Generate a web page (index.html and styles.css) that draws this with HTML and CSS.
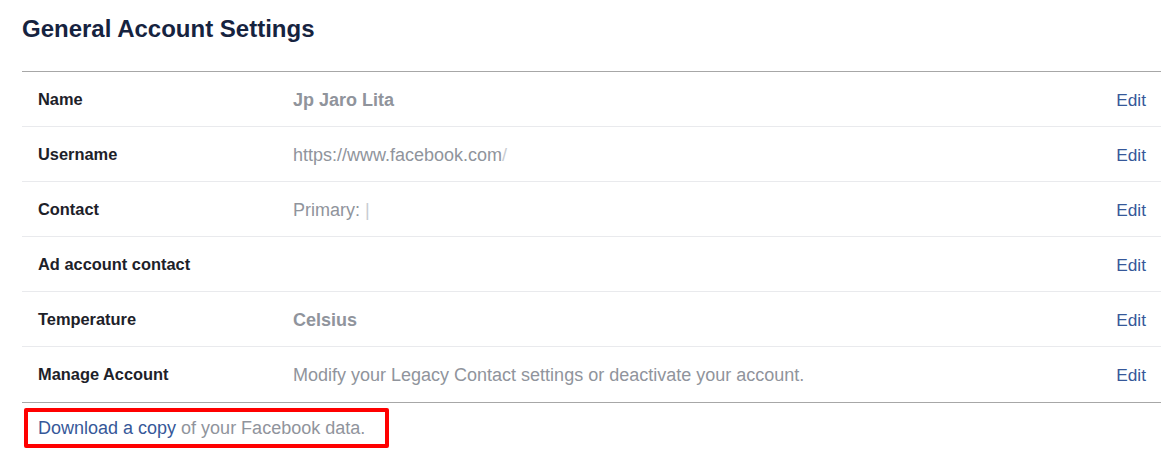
FILE: index.html
```html
<!DOCTYPE html>
<html lang="en">
<head>
<meta charset="utf-8">
<title>General Account Settings</title>
<link rel="stylesheet" href="styles.css">
</head>
<body>
<div class="page">
  <h1 class="title">General Account Settings</h1>
  <div class="settings">
    <div class="row">
      <div class="label">Name</div>
      <div class="value strong">Jp Jaro Lita</div>
      <a class="edit" href="#">Edit</a>
    </div>
    <div class="row">
      <div class="label">Username</div>
      <div class="value">https://www.facebook.com<span class="blur">/</span></div>
      <a class="edit" href="#">Edit</a>
    </div>
    <div class="row">
      <div class="label">Contact</div>
      <div class="value">Primary: <span class="blur">|</span></div>
      <a class="edit" href="#">Edit</a>
    </div>
    <div class="row">
      <div class="label">Ad account contact</div>
      <div class="value"></div>
      <a class="edit" href="#">Edit</a>
    </div>
    <div class="row">
      <div class="label">Temperature</div>
      <div class="value strong">Celsius</div>
      <a class="edit" href="#">Edit</a>
    </div>
    <div class="row">
      <div class="label">Manage Account</div>
      <div class="value">Modify your Legacy Contact settings or deactivate your account.</div>
      <a class="edit" href="#">Edit</a>
    </div>
  </div>
  <div class="footer">
    <p class="download"><a href="#" class="link">Download a copy</a> of your Facebook data.</p>
  </div>
</div>
</body>
</html>
```
FILE: styles.css
```css
html, body {
  margin: 0;
  padding: 0;
  background: #ffffff;
}
body {
  font-family: "Liberation Sans", Arial, sans-serif;
}
.page {
  padding: 0 7px 0 22px;
}
.title {
  margin: 0;
  padding-top: 15px;
  height: 71px;
  box-sizing: border-box;
  font-size: 24px;
  line-height: 28px;
  font-weight: bold;
  color: #16233f;
}
.settings {
  border-top: 1px solid #a7a7a7;
  border-bottom: 1px solid #a7a7a7;
}
.row {
  display: flex;
  align-items: flex-start;
  height: 55.05px;
  box-sizing: border-box;
  padding: 0 15px 0 16px;
  border-bottom: 1px solid #e9eaed;
}
.row:last-child {
  border-bottom: none;
}
.label {
  width: 255px;
  flex: none;
  padding-top: 17px;
  font-size: 16.4px;
  line-height: 20px;
  font-weight: bold;
  color: #1d2129;
}
.value {
  flex: 1;
  padding-top: 18px;
  font-size: 18px;
  line-height: 21px;
  color: #90949c;
}
.value.strong {
  font-weight: bold;
}
.blur {
  color: #c8ccd2;
}
.edit {
  padding-top: 18px;
  font-size: 17.3px;
  line-height: 21px;
  color: #365899;
  text-decoration: none;
}
.footer {
  padding: 5px 0 0 2px;
}
.download {
  display: inline-block;
  margin: 0;
  padding: 4px 20px 4px 10px;
  border: 4px solid #ff0000;
  border-radius: 2px;
  font-size: 18px;
  line-height: 24px;
  color: #90949c;
}
.link {
  color: #365899;
  text-decoration: none;
}
```
